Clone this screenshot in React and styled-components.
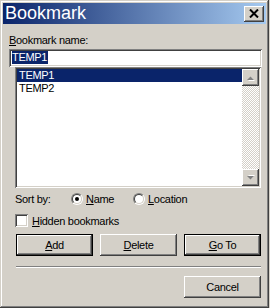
import styled, { createGlobalStyle } from "styled-components"

const GlobalStyle = createGlobalStyle`
  html, body {
    margin: 0;
    padding: 0;
    background: #d4d0c8;
  }
  body {
    font-family: "Liberation Sans", Arial, sans-serif;
    font-size: 11px;
    letter-spacing: -0.3px;
    color: #000;
  }
  * { box-sizing: border-box; }
`

const raised = `
  box-shadow: inset -1px -1px #404040, inset 1px 1px #fff,
    inset -2px -2px #808080, inset 2px 2px #d4d0c8;
`
const sunken = `
  box-shadow: inset 1px 1px #808080, inset -1px -1px #fff,
    inset 2px 2px #404040, inset -2px -2px #d4d0c8;
`

const Window = styled.div`
  width: 269px;
  height: 308px;
  padding: 3px;
  background: #d4d0c8;
  display: flex;
  flex-direction: column;
  box-shadow: inset -1px -1px #404040, inset 1px 1px #d4d0c8,
    inset -2px -2px #808080, inset 2px 2px #fff;
`
const TitleBar = styled.div`
  height: 21px;
  padding: 0 2px 0 2px;
  display: flex;
  align-items: center;
  justify-content: space-between;
  background: linear-gradient(to right, #0a246a, #a6caf0);
`
const TitleText = styled.span`
  color: #fff;
  font-size: 18px;
  letter-spacing: 0;
  line-height: 21px;
`
const CloseButton = styled.div`
  width: 20px;
  height: 16px;
  background: #d4d0c8;
  display: flex;
  align-items: center;
  justify-content: center;
  padding-bottom: 1px;
  ${raised}
`
const Body = styled.div`
  flex: 1;
  display: flex;
  flex-direction: column;
  padding: 0 4px 0 6px;
`
const FieldLabel = styled.div`
  margin-top: 10px;
  line-height: 13px;
  height: 13px;
`
const NameInput = styled.div`
  margin-top: 2px;
  height: 18px;
  background: #fff;
  padding: 2px 3px;
  line-height: 13px;
  ${sunken}
`
const Selection = styled.span`
  display: inline-block;
  background: #0a246a;
  color: #fff;
  padding: 0 1px 0 0;
  line-height: 13px;
`
const ListBox = styled.div`
  margin: 0 1px 0 6px;
  height: 121px;
  padding: 2px;
  background: #fff;
  display: flex;
  ${sunken}
`
const ListItems = styled.div`
  flex: 1;
  display: flex;
  flex-direction: column;
`
const ListItem = styled.div`
  height: 13px;
  line-height: 13px;
  padding-left: 2px;
  background: ${({ $selected }) => ($selected ? "#0a246a" : "transparent")};
  color: ${({ $selected }) => ($selected ? "#fff" : "#000")};
`
const ScrollBar = styled.div`
  width: 17px;
  display: flex;
  flex-direction: column;
`
const ScrollButton = styled.div`
  width: 17px;
  height: 17px;
  background: #d4d0c8;
  display: flex;
  align-items: center;
  justify-content: center;
  ${raised}
`
const ScrollTrack = styled.div`
  flex: 1;
  background: repeating-conic-gradient(#d4d0c8 0 25%, #fff 0 50%) 0 0 / 2px 2px;
`
const OptionsRow = styled.div`
  margin: 3px 0 0 6px;
  height: 16px;
  display: flex;
  align-items: center;
`
const SortLabel = styled.span`
  width: 56px;
`
const RadioOption = styled.label`
  display: flex;
  align-items: center;
  gap: 3px;
  width: ${({ $width }) => $width || "auto"};
`
const RadioCircle = styled.span`
  position: relative;
  width: 12px;
  height: 12px;
  border-radius: 50%;
  border: 1px solid;
  border-color: #808080 #fff #fff #808080;
  &::before {
    content: "";
    position: absolute;
    inset: 0;
    border-radius: 50%;
    border: 1px solid;
    border-color: #404040 #d4d0c8 #d4d0c8 #404040;
    background: #fff;
  }
  &::after {
    content: "";
    display: ${({ $checked }) => ($checked ? "block" : "none")};
    position: absolute;
    left: 3px;
    top: 3px;
    width: 4px;
    height: 4px;
    border-radius: 50%;
    background: #000;
  }
`
const CheckRow = styled.label`
  margin: 5px 0 0 6px;
  height: 17px;
  display: flex;
  align-items: center;
  gap: 4px;
`
const CheckBox = styled.span`
  width: 13px;
  height: 13px;
  background: #fff;
  ${sunken}
`
const ButtonRow = styled.div`
  margin: 5px 1px 0 7px;
  display: flex;
  gap: 7px;
`
const PushButton = styled.div`
  width: 77px;
  height: 22px;
  background: #d4d0c8;
  display: flex;
  align-items: center;
  justify-content: center;
  line-height: 13px;
  ${({ $default }) =>
    $default
      ? `box-shadow: inset 0 0 0 1px #000, inset -2px -2px #404040, inset 2px 2px #fff,
          inset -3px -3px #808080, inset 3px 3px #d4d0c8;`
      : raised}
`
const Separator = styled.div`
  margin: 10px 1px 0 7px;
  height: 2px;
  border-top: 1px solid #808080;
  border-bottom: 1px solid #fff;
`
const FooterRow = styled.div`
  margin: 8px 1px 0 0;
  display: flex;
  justify-content: flex-end;
`

function UpArrow({ down }) {
  return (
    <svg width="9" height="6" viewBox="0 0 9 6" style={down ? { transform: "scaleY(-1)" } : undefined}>
      <polygon points="1,5 8,5 4.5,1.5" fill="#fff" transform="translate(1,1)" />
      <polygon points="1,5 8,5 4.5,1.5" fill="#808080" />
    </svg>
  )
}

export default function App() {
  return (
    <>
      <GlobalStyle />
      <Window>
        <TitleBar>
          <TitleText>Bookmark</TitleText>
          <CloseButton>
            <svg width="10" height="9" viewBox="0 0 10 9">
              <path d="M1 0.5 L9 8.5 M9 0.5 L1 8.5" stroke="#000" strokeWidth="2" />
            </svg>
          </CloseButton>
        </TitleBar>
        <Body>
          <FieldLabel><u>B</u>ookmark name:</FieldLabel>
          <NameInput>
            <Selection>TEMP1</Selection>
          </NameInput>
          <ListBox>
            <ListItems>
              <ListItem $selected>TEMP1</ListItem>
              <ListItem>TEMP2</ListItem>
            </ListItems>
            <ScrollBar>
              <ScrollButton><UpArrow /></ScrollButton>
              <ScrollTrack />
              <ScrollButton><UpArrow down /></ScrollButton>
            </ScrollBar>
          </ListBox>
          <OptionsRow>
            <SortLabel>Sort by:</SortLabel>
            <RadioOption $width="62px">
              <RadioCircle $checked />
              <span><u>N</u>ame</span>
            </RadioOption>
            <RadioOption>
              <RadioCircle />
              <span><u>L</u>ocation</span>
            </RadioOption>
          </OptionsRow>
          <CheckRow>
            <CheckBox />
            <span><u>H</u>idden bookmarks</span>
          </CheckRow>
          <ButtonRow>
            <PushButton $default><span><u>A</u>dd</span></PushButton>
            <PushButton><span><u>D</u>elete</span></PushButton>
            <PushButton $default><span><u>G</u>o To</span></PushButton>
          </ButtonRow>
          <Separator />
          <FooterRow>
            <PushButton>Cancel</PushButton>
          </FooterRow>
        </Body>
      </Window>
    </>
  )
}
